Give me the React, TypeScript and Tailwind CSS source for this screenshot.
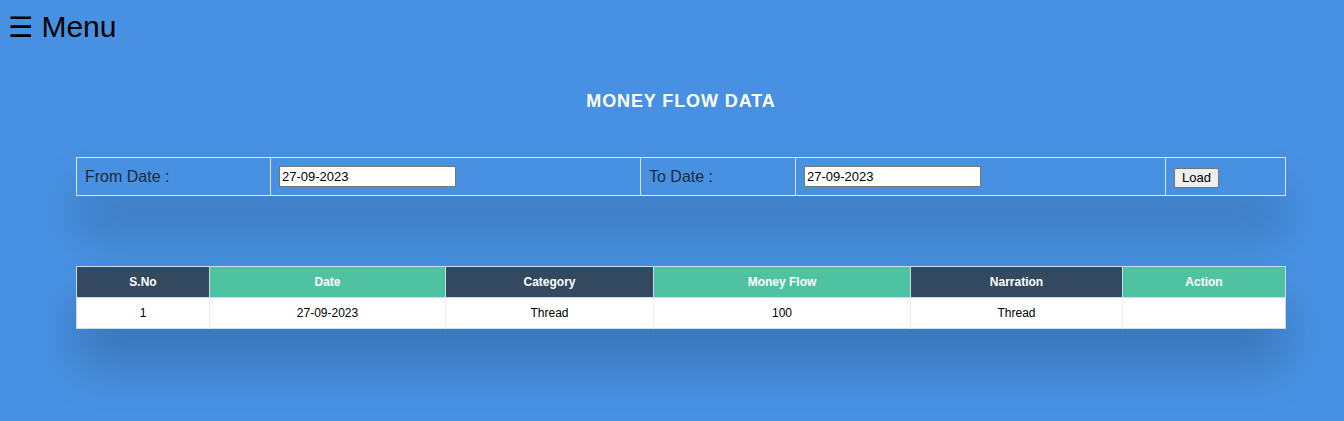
import React from "react";

const rows = [
  { sno: 1, date: "27-09-2023", category: "Thread", flow: "100", narration: "Thread" },
];

const headers = [
  { label: "S.No", w: "w-[133px]", bg: "bg-[#324960]" },
  { label: "Date", w: "w-[236px]", bg: "bg-[#4fc3a1]" },
  { label: "Category", w: "w-[208px]", bg: "bg-[#324960]" },
  { label: "Money Flow", w: "w-[257px]", bg: "bg-[#4fc3a1]" },
  { label: "Narration", w: "w-[212px]", bg: "bg-[#324960]" },
  { label: "Action", w: "w-[163px]", bg: "bg-[#4fc3a1]" },
];

export default function App() {
  return (
    <div className="min-h-[421px] bg-[#4891e2] font-['Liberation_Sans',Arial,sans-serif] pb-10">
      <div className="h-[46px] px-2 pt-[8px] text-[30px] leading-[38px] text-black">
        <span className="font-['DejaVu_Sans',sans-serif] text-[28px]">☰</span> Menu
      </div>

      <h2 className="mt-[45px] ml-[76px] w-[1210px] text-center text-[18px] font-bold tracking-[0.9px] text-white leading-[20px]">
        MONEY FLOW DATA
      </h2>

      <table className="mt-[46px] ml-[76px] w-[1210px] table-fixed border-collapse border border-[#d6e6f7] shadow-[0_35px_50px_rgba(0,0,0,0.2)]">
        <tbody>
          <tr className="h-[38px]">
            <td className="w-[194px] border border-[#d6e6f7] px-2 text-[16px] text-[#1b2a3a]">From Date :</td>
            <td className="w-[370px] border border-[#d6e6f7] px-2">
              <input
                readOnly
                value="27-09-2023"
                className="block h-[21px] w-[177px] border border-[#767676] bg-white px-[2px] text-[13px] text-black"
              />
            </td>
            <td className="w-[155px] border border-[#d6e6f7] px-2 text-[16px] text-[#1b2a3a]">To Date :</td>
            <td className="w-[370px] border border-[#d6e6f7] px-2">
              <input
                readOnly
                value="27-09-2023"
                className="block h-[21px] w-[177px] border border-[#767676] bg-white px-[2px] text-[13px] text-black"
              />
            </td>
            <td className="border border-[#d6e6f7] px-2">
              <button className="h-[20px] rounded-[2px] border border-[#767676] bg-[#efefef] px-[7px] text-[13px] leading-[16px] text-black">
                Load
              </button>
            </td>
          </tr>
        </tbody>
      </table>

      <table className="mt-[70px] ml-[76px] w-[1210px] table-fixed border-collapse border border-[#c9dcf2] bg-white shadow-[0_35px_50px_rgba(0,0,0,0.2)]">
        <thead>
          <tr className="h-[31px]">
            {headers.map((h) => (
              <th
                key={h.label}
                className={`${h.w} ${h.bg} border border-[#c9dcf2] text-center text-[12px] font-bold text-white`}
              >
                {h.label}
              </th>
            ))}
          </tr>
        </thead>
        <tbody>
          {rows.map((r) => (
            <tr key={r.sno} className="h-[31px] text-center text-[12px] text-black">
              <td className="border-r border-[#f0f0f0]">{r.sno}</td>
              <td className="border-r border-[#f0f0f0]">{r.date}</td>
              <td className="border-r border-[#f0f0f0]">{r.category}</td>
              <td className="border-r border-[#f0f0f0]">{r.flow}</td>
              <td className="border-r border-[#f0f0f0]">{r.narration}</td>
              <td></td>
            </tr>
          ))}
        </tbody>
      </table>
    </div>
  );
}
